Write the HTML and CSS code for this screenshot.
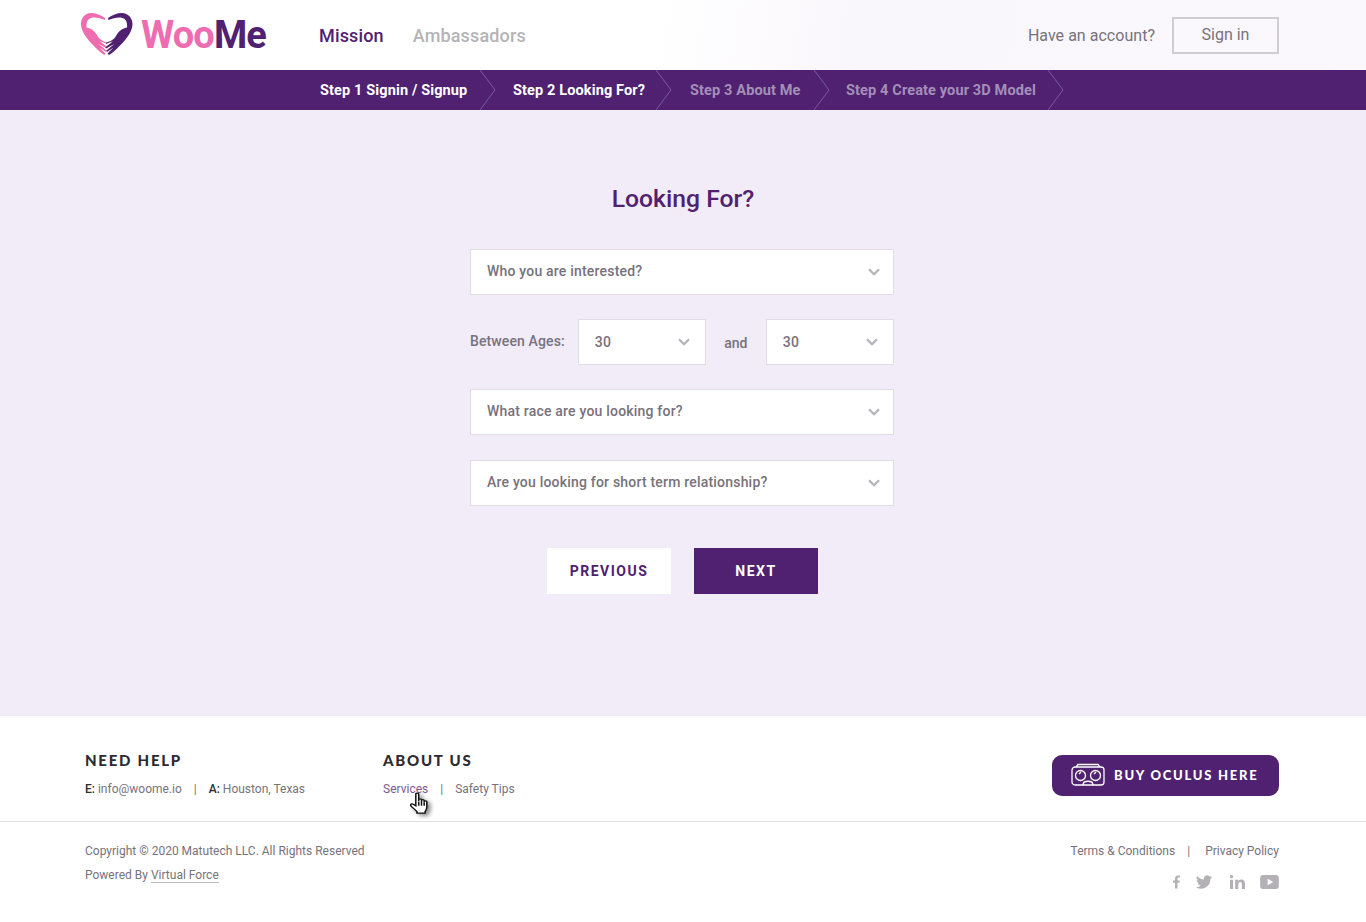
FILE: index.html
```html
<!DOCTYPE html>
<html lang="en">
<head>
<meta charset="utf-8">
<title>WooMe - Looking For?</title>
<link rel="stylesheet" href="styles.css">
</head>
<body>
<header class="topbar">
  <a class="brand" href="#">
    <svg class="brand-mark" viewBox="0 0 52 44" width="52" height="44" aria-hidden="true">
      <path fill="#ee6cb0" d="M24 5C20 2 15 0 10 0 4 0 0 5 0 11c0 8 7 16 13 22 3 3 7 7 10.500 9l1-1.500-6-6 6.500 4.500.7-1.200-8-6.800 8.300 4.500.5-1.200-7.500-6 7 2.500.3-1C21 28 18 26 16.500 23 14.500 19 11 15.500 5.500 14.500 5 9.500 6.500 6 10 5c4-1 9 0 14 2z"/>
      <path fill="#4f2170" d="M27 5c4-3 9-5 14-5 6 0 10.500 5 10.500 11 0 8-7 16-13 22-3 3-7 7-10.500 9l-1.500-1.500 6-6-6.500 4.500-.7-1.200 8-6.800-8.300 4.500-.5-1.200 7.500-6-7 2.500-.3-1C30.500 28 33.500 26 35 23 37 19 40.500 15.500 46 14.500 46.500 9.500 45 6 41.500 5c-4-1-9 0-14 2z"/>
    </svg>
    <span class="brand-name"><span class="brand-woo">Woo</span><span class="brand-me">Me</span></span>
  </a>
  <nav class="main-nav">
    <a class="nav-link nav-active" href="#">Mission</a>
    <a class="nav-link" href="#">Ambassadors</a>
  </nav>
  <div class="account">
    <span class="account-text">Have an account?</span>
    <a class="signin" href="#">Sign in</a>
  </div>
</header>

<div class="steps">
  <div class="step step-one step-done">Step 1 Signin / Signup<svg class="chev" viewBox="0 0 16 40" aria-hidden="true"><path d="M0 0 15 20 0 40"/></svg></div>
  <div class="step step-two step-done">Step 2 Looking For?<svg class="chev" viewBox="0 0 16 40" aria-hidden="true"><path d="M0 0 15 20 0 40"/></svg></div>
  <div class="step step-three">Step 3 About Me<svg class="chev" viewBox="0 0 16 40" aria-hidden="true"><path d="M0 0 15 20 0 40"/></svg></div>
  <div class="step step-four">Step 4 Create your 3D Model<svg class="chev" viewBox="0 0 16 40" aria-hidden="true"><path d="M0 0 15 20 0 40"/></svg></div>
</div>

<main class="content">
  <h1 class="title">Looking For?</h1>
  <form class="form">
    <div class="select select-top">Who you are interested?<svg class="caret" viewBox="0 0 12 8" aria-hidden="true"><path d="M1 1.2 6 6.2 11 1.2"/></svg></div>
    <div class="ages">
      <span class="ages-label">Between Ages:</span>
      <div class="select select-age select-first">30<svg class="caret" viewBox="0 0 12 8" aria-hidden="true"><path d="M1 1.2 6 6.2 11 1.2"/></svg></div>
      <span class="ages-and">and</span>
      <div class="select select-age">30<svg class="caret" viewBox="0 0 12 8" aria-hidden="true"><path d="M1 1.2 6 6.2 11 1.2"/></svg></div>
    </div>
    <div class="select">What race are you looking for?<svg class="caret" viewBox="0 0 12 8" aria-hidden="true"><path d="M1 1.2 6 6.2 11 1.2"/></svg></div>
    <div class="select select-last">Are you looking for short term relationship?<svg class="caret" viewBox="0 0 12 8" aria-hidden="true"><path d="M1 1.2 6 6.2 11 1.2"/></svg></div>
    <div class="actions">
      <a class="btn btn-prev" href="#">PREVIOUS</a>
      <a class="btn btn-next" href="#">NEXT</a>
    </div>
  </form>
</main>

<footer class="footer">
  <div class="footer-top">
    <div class="foot-col foot-help">
      <h2 class="foot-head">NEED HELP</h2>
      <p class="foot-line"><b>E:</b> info@woome.io<span class="sep">|</span><b>A:</b> Houston, Texas</p>
    </div>
    <div class="foot-col">
      <h2 class="foot-head">ABOUT US</h2>
      <p class="foot-line"><a class="foot-hover" href="#">Services<svg class="pointer" viewBox="1.500 0 15.500 23" width="18" height="22" preserveAspectRatio="none" aria-hidden="true"><path d="M6.5 2.2c0-1.500 2.500-1.500 2.500 0V10V8.200c0-1.400 2.400-1.400 2.400 0V10.500 9c0-1.300 2.300-1.300 2.300 0v2 -.8c0-1.300 2.300-1.300 2.300 0v5.800c0 2-.8 3-1.500 4.500v1.500H7.500v-1.500C6 18.500 4.500 17 3 15.500 1 13.500 2.500 11.500 4.500 13l2 1.500z"/><path d="M9 10.500v4M11.400 10.500v4M13.700 11v3.500"/></svg></a><span class="sep">|</span><a class="foot-link" href="#">Safety Tips</a></p>
    </div>
    <a class="oculus" href="#">
      <svg class="oculus-icon" viewBox="0 0 34 24" width="34" height="24" aria-hidden="true">
        <path d="M5 4 7 1.500H27L29 4"/>
        <rect x="1" y="4" width="32" height="18" rx="3"/>
        <circle cx="9.500" cy="12.500" r="5"/>
        <circle cx="24.500" cy="12.500" r="5"/>
        <path d="M8 11l2-2M23 11l2-2M12 22c0-5 10-5 10 0"/>
      </svg>
      <span>BUY OCULUS HERE</span>
    </a>
  </div>
  <div class="footer-bottom">
    <div class="legal">
      <p>Copyright © 2020 Matutech LLC. All Rights Reserved</p>
      <p>Powered By <a class="vf" href="#">Virtual Force</a></p>
    </div>
    <div class="legal-right">
      <p><a class="foot-link" href="#">Terms &amp; Conditions</a><span class="sep sep-wide">|</span><a class="foot-link" href="#">Privacy Policy</a></p>
      <div class="social">
        <svg viewBox="0 0 8 15" width="7" height="14" aria-hidden="true"><path d="M2.300 15V8.400H0V5.800h2.300V3.800C2.300 1.300 3.700 0 5.900 0c1 0 1.700.1 2.100.1v2.300H6.600c-1.100 0-1.400.6-1.400 1.400v2h2.700l-.4 2.600H5.200V15z"/></svg>
        <svg viewBox="0 0 24 20" width="16" height="14" aria-hidden="true"><path d="M24 2.400c-.9.400-1.800.7-2.800.8 1-.6 1.800-1.600 2.200-2.700-1 .6-2 1-3.100 1.200A4.900 4.900 0 0 0 11.900 6.200C7.800 6 4.200 4.100 1.700.9A4.900 4.900 0 0 0 3.200 7.500c-.8 0-1.600-.2-2.200-.6 0 2.400 1.700 4.400 3.900 4.900-.7.200-1.500.2-2.200.1.600 2 2.400 3.400 4.600 3.400A9.900 9.900 0 0 1 0 17.800 13.900 13.900 0 0 0 21.500 5.400c1-.7 1.800-1.600 2.500-3z"/></svg>
        <svg class="social-in" viewBox="0 0 16 15" width="15" height="14" aria-hidden="true"><path d="M0 5h3.300v10H0zM1.650 0a1.800 1.800 0 1 1 0 3.600 1.800 1.800 0 0 1 0-3.600zM5.500 5h3.100v1.400C9.100 5.500 10.200 4.700 11.800 4.700c3.300 0 4.200 2.100 4.200 5V15h-3.300v-4.700c0-1.300-.2-2.800-1.800-2.800s-2.100 1.300-2.100 2.700V15H5.500z"/></svg>
        <svg class="social-yt" viewBox="0 0 20 15" width="19" height="14" aria-hidden="true"><path fill-rule="evenodd" d="M3 0h14c1.700 0 3 1.300 3 3v9c0 1.700-1.300 3-3 3H3c-1.700 0-3-1.300-3-3V3c0-1.700 1.300-3 3-3zm5 4v7l6-3.500z"/></svg>
      </div>
    </div>
  </div>
</footer>
</body>
</html>
```
FILE: styles.css
```css
* { box-sizing: border-box; }
html, body { margin: 0; padding: 0; }
body {
  font-family: Roboto, "Liberation Sans", sans-serif;
  background: #fff;
  color: #77727c;
  min-height: 922px;
}
a { text-decoration: none; color: inherit; }
p, h1, h2 { margin: 0; }

.topbar {
  height: 70px;
  display: flex;
  align-items: center;
  padding: 0 87px 0 81px;
  background: linear-gradient(100deg, #fff 48%, #faf7fc 62%, #faf8fc 100%);
}
.brand { display: flex; align-items: center; gap: 8px; width: 238px; }
.brand-mark { display: block; }
.brand-name { font-size: 38px; font-weight: 700; letter-spacing: -0.9px; line-height: 44px; }
.brand-woo { color: #ee6cb0; }
.brand-me { color: #4f2170; }
.main-nav { display: flex; gap: 29px; font-size: 18px; font-weight: 500; letter-spacing: 0.15px; color: #b5b3b8; }
.nav-active { color: #4f2170; }
.account { margin-left: auto; display: flex; align-items: center; gap: 17px; }
.account-text { font-size: 16px; color: #77727c; font-weight: 400; letter-spacing: .03px; }
.signin {
  width: 107px; height: 37px;
  border: 2px solid #cfcdd2;
  display: flex; align-items: center; justify-content: center;
  font-size: 16px; color: #77727c;
  padding-bottom: 2px;
}

.steps {
  height: 40px;
  background: #4f2170;
  display: flex;
  padding-left: 320px;
  font-size: 14.5px;
  font-weight: 700;
  letter-spacing: .13px;
  color: #a58fb8;
}
.step { position: relative; line-height: 41px; white-space: nowrap; }
.step-done { color: #fff; }
.step-one { width: 193px; }
.step-two { width: 177px; }
.step-three { width: 156px; }
.chev { position: absolute; top: 0; width: 16px; height: 40px; fill: none; stroke: #7d5a9a; stroke-width: 1; }
.step-one .chev { left: 160px; }
.step-two .chev { left: 143px; }
.step-three .chev { left: 124px; }
.step-four .chev { left: 202px; }

.content {
  height: 606px;
  background: #f2ecf8;
  padding-top: 74px;
}
.title {
  font-size: 24.7px; font-weight: 500; line-height: 29px;
  color: #4f2170; text-align: center;
  margin-bottom: 36px;
}
.form { width: 424px; margin-left: 470px; }
.select {
  position: relative;
  height: 46px;
  background: #fff;
  border: 1px solid #e1dce6;
  padding: 0 16px;
  line-height: 43px;
  font-size: 14px;
  font-weight: 500;
  letter-spacing: .2px;
  color: #77727c;
  margin-bottom: 25px;
}
.select-top { margin-bottom: 24px; }
.select-last { margin-bottom: 42px; }
.caret {
  position: absolute; right: 13px; top: 18px;
  width: 12px; height: 8px;
  fill: none; stroke: #b6b2ba; stroke-width: 2.300;
}
.ages { display: flex; align-items: flex-start; height: 46px; margin-bottom: 24px; }
.ages .select { margin-bottom: 0; line-height: 45px; }
.select-age { width: 128px; font-weight: 500; padding-left: 16px; }
.select-first { margin-left: 13px; }
.ages .caret { right: 15px; top: 18px; }
.ages-label { font-size: 14px; font-weight: 500; line-height: 44px; letter-spacing: .12px; }
.ages-and { width: 60px; text-align: center; font-size: 14px; font-weight: 500; line-height: 49px; }
.actions { display: flex; gap: 23px; padding-left: 77px; }
.btn {
  width: 124px; height: 46px;
  display: flex; align-items: center; justify-content: center;
  font-size: 14px; font-weight: 700; letter-spacing: 1.5px;
}
.btn-prev { background: #fff; color: #4f2170; }
.btn-next { background: #4f2170; color: #fff; }

.footer { font-size: 12px; color: #77727c; }
.footer-top {
  height: 106px;
  display: flex;
  padding: 34px 87px 0 85px;
  border-bottom: 1px solid #e2e0e4;
}
.foot-col { flex: none; }
.foot-help { width: 298px; }
.foot-head {
  font-family: Lato, "Liberation Sans", sans-serif;
  font-size: 15px; font-weight: 900; letter-spacing: 1.75px;
  line-height: 20px; color: #2d2b30;
  margin-bottom: 10px;
}
.foot-line { line-height: 18px; white-space: nowrap; }
.foot-line b { color: #2d2b30; font-weight: 500; }
.sep { margin: 0 12px; }
.foot-hover { position: relative; color: #7a5a94; }
.pointer {
  position: absolute; left: 27px; top: 10px;
  fill: #fff; stroke: #111; stroke-width: 1.300;
  filter: drop-shadow(3px 2px 2px rgba(0,0,0,.45));
}
.oculus {
  margin-left: auto;
  margin-top: 5px;
  width: 227px; height: 41px;
  border-radius: 10px;
  background: #4f2170;
  display: flex; align-items: center; gap: 9px;
  padding: 0 0 1px 19px;
  font-family: Lato, "Liberation Sans", sans-serif;
  font-size: 13px; font-weight: 900; letter-spacing: 1.75px;
  color: #fff;
}
.oculus-icon { fill: none; stroke: #fff; stroke-width: 1.300; }

.footer-bottom {
  display: flex; justify-content: space-between;
  padding: 17px 87px 0 85px;
}
.legal p { line-height: 24px; }
.vf { border-bottom: 1px solid #bdbbc0; }
.legal-right { text-align: right; }
.legal-right p { line-height: 24px; }
.sep-wide { margin: 0 15px 0 12px; }
.social { display: flex; justify-content: flex-end; align-items: center; gap: 16px; margin-top: 12px; fill: #b3b1b5; }
.social svg { display: block; }
.social .social-in { margin-left: 2px; }
.social .social-yt { margin-left: -1px; }
```
